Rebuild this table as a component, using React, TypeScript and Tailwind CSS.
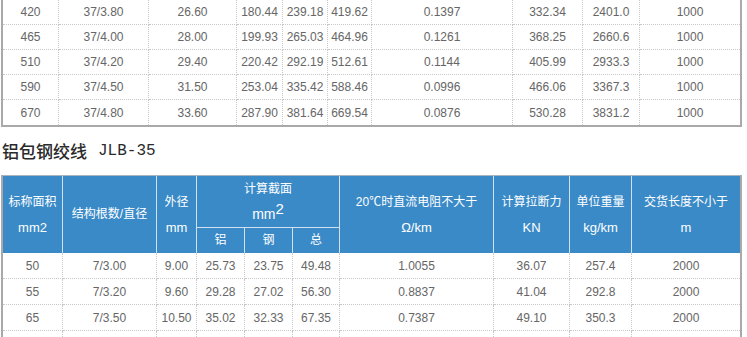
import React from 'react';

const topCols = 'grid-cols-[56px_90px_88px_46px_45px_44px_141px_70px_57px_100px]';
const botCols = 'grid-cols-[60px_94px_40px_48px_48px_47px_154px_76px_62px_108px]';

const topRows: string[][] = [
  ['420', '37/3.80', '26.60', '180.44', '239.18', '419.62', '0.1397', '332.34', '2401.0', '1000'],
  ['465', '37/4.00', '28.00', '199.93', '265.03', '464.96', '0.1261', '368.25', '2660.6', '1000'],
  ['510', '37/4.20', '29.40', '220.42', '292.19', '512.61', '0.1144', '405.99', '2933.3', '1000'],
  ['590', '37/4.50', '31.50', '253.04', '335.42', '588.46', '0.0996', '466.06', '3367.3', '1000'],
  ['670', '37/4.80', '33.60', '287.90', '381.64', '669.54', '0.0876', '530.28', '3831.2', '1000'],
];

const jlbRows: string[][] = [
  ['50', '7/3.00', '9.00', '25.73', '23.75', '49.48', '1.0055', '36.07', '257.4', '2000'],
  ['55', '7/3.20', '9.60', '29.28', '27.02', '56.30', '0.8837', '41.04', '292.8', '2000'],
  ['65', '7/3.50', '10.50', '35.02', '32.33', '67.35', '0.7387', '49.10', '350.3', '2000'],
  ['', '', '', '', '', '', '', '', '', ''],
];

// 一行数据：虚线分隔
const DataRow = ({ cells, h, last }: { cells: string[]; h: string; last?: boolean }) => (
  <>
    {cells.map((c, i) => (
      <div
        key={i}
        className={`${h} flex items-center justify-center text-[12px] text-[#666] whitespace-nowrap border-dotted border-[#c8c8c8] ${
          i < cells.length - 1 ? 'border-r' : ''
        } ${last ? '' : 'border-b'}`}
      >
        {c}
      </div>
    ))}
  </>
);

const HeadCell = ({ children, className = '' }: { children: React.ReactNode; className?: string }) => (
  <div className={`flex flex-col items-center justify-center text-center text-white text-[12px] leading-[25px] border-[#cfe1ef] ${className}`}>
    {children}
  </div>
);

export default function App() {
  return (
    <div className="w-[747px] h-[337px] overflow-hidden bg-white font-['Liberation_Sans','Noto_Sans_CJK_SC',sans-serif]">
      {/* 上一张表（只露出末尾五行） */}
      <div className={`ml-[1px] w-[741px] grid ${topCols} border-l-2 border-r-2 border-b-2 border-[#a9a9a9]`}>
        {topRows.map((r, i) => (
          <DataRow key={i} cells={r} h="h-[25px]" last={i === topRows.length - 1} />
        ))}
      </div>

      {/* 标题 */}
      <div className="h-[48px] flex items-center pl-[2px] text-[#2a2a2a]">
        <span className="text-[17px] font-medium font-['Noto_Sans_CJK_SC',sans-serif]">铝包钢绞线</span>
        <span className="ml-[11px] text-[16px] font-['Liberation_Mono',monospace]">JLB-35</span>
      </div>

      {/* 铝包钢绞线 JLB-35 */}
      <div className="ml-[1px] w-[741px] border-l-2 border-r-2 border-t border-[#a9b4bd] border-l-[#a9a9a9] border-r-[#a9a9a9]">
        <div className={`grid ${botCols} bg-[#3a8ac7]`}>
          <HeadCell className="row-span-2 border-r">
            <span>标称面积</span>
            <span className="text-[13px]">mm2</span>
          </HeadCell>
          <HeadCell className="row-span-2 border-r">
            <span>结构根数/直径</span>
          </HeadCell>
          <HeadCell className="row-span-2 border-r">
            <span>外径</span>
            <span className="text-[13px]">mm</span>
          </HeadCell>
          <HeadCell className="col-span-3 h-[51px] border-r leading-[23px]">
            <span>计算截面</span>
            <span className="text-[14px]">
              mm<sup className="text-[15px] top-[-5px]">2</sup>
            </span>
          </HeadCell>
          <HeadCell className="row-span-2 border-r">
            <span>20℃时直流电阻不大于</span>
            <span className="text-[13px]">Ω/km</span>
          </HeadCell>
          <HeadCell className="row-span-2 border-r">
            <span>计算拉断力</span>
            <span className="text-[13px]">KN</span>
          </HeadCell>
          <HeadCell className="row-span-2 border-r">
            <span>单位重量</span>
            <span className="text-[13px]">kg/km</span>
          </HeadCell>
          <HeadCell className="row-span-2">
            <span>交货长度不小于</span>
            <span className="text-[13px]">m</span>
          </HeadCell>
          <HeadCell className="h-[26px] border-t border-r">铝</HeadCell>
          <HeadCell className="h-[26px] border-t border-r">钢</HeadCell>
          <HeadCell className="h-[26px] border-t border-r">总</HeadCell>
        </div>
        <div className={`grid ${botCols}`}>
          {jlbRows.map((r, i) => (
            <DataRow key={i} cells={r} h="h-[26px]" />
          ))}
        </div>
      </div>
    </div>
  );
}
